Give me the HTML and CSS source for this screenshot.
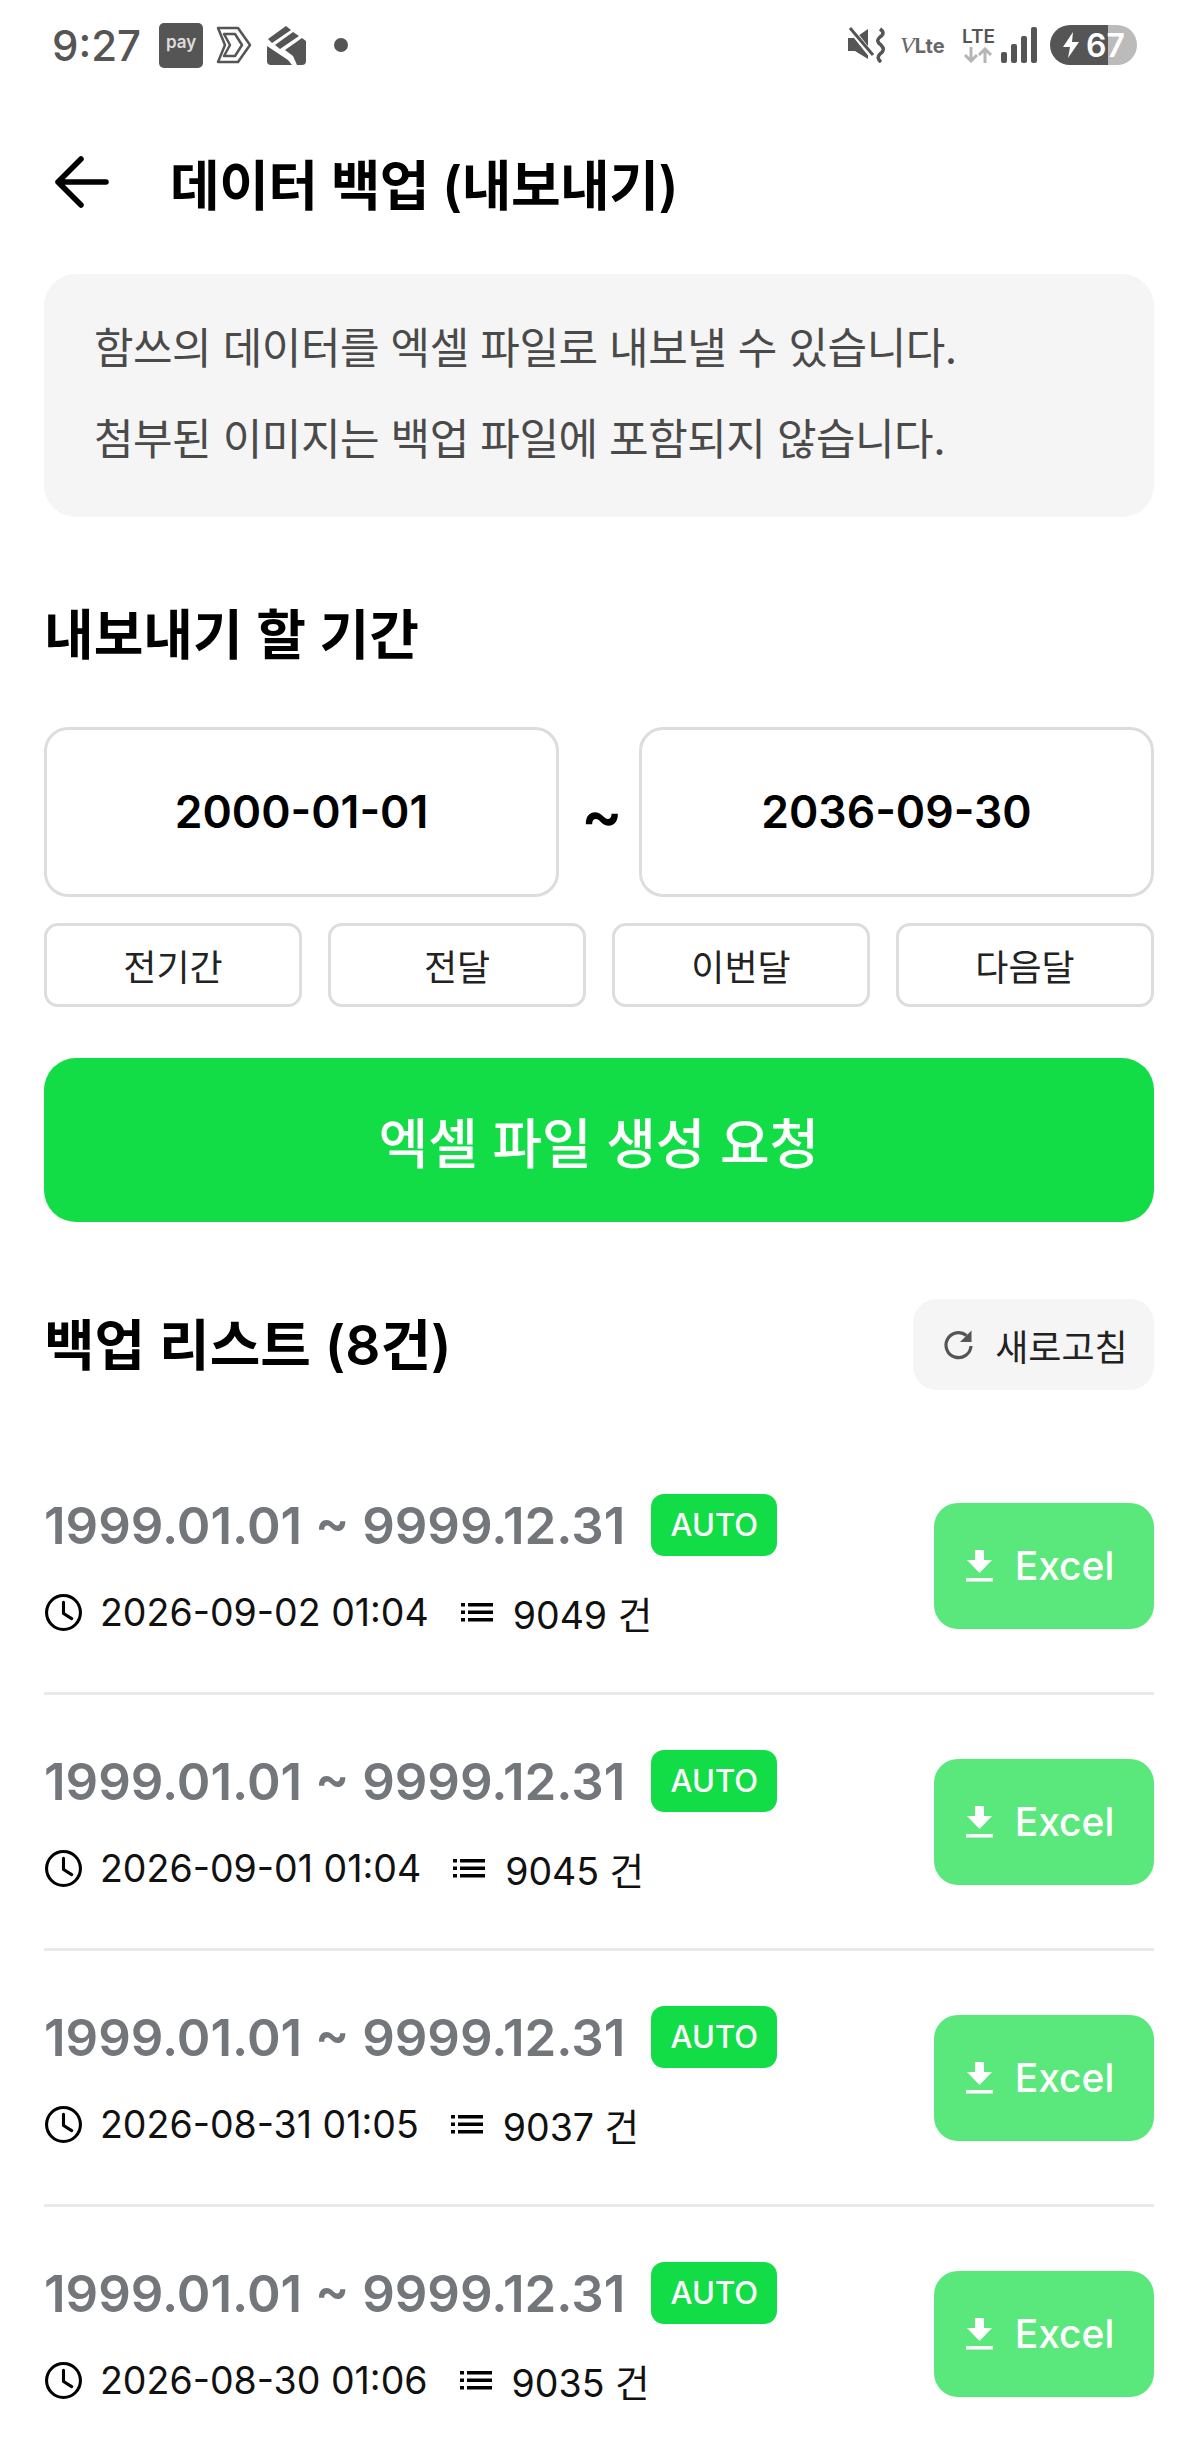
FILE: index.html
```html
<!DOCTYPE html>
<html lang="ko">
<head>
    <meta charset="UTF-8">
    <meta name="viewport" content="width=device-width, initial-scale=1.0">
    <title>데이터 백업 (내보내기)</title>
    <link rel="stylesheet" href="styles.css">
</head>
<body>
    <div class="status-bar">
        <div class="status-left">
            <span class="status-time">9:27</span>
            <span class="pay-icon">pay</span>
            <svg class="notif-icon" width="37" height="38" viewBox="0 0 37 38" fill="none" stroke="#555" stroke-width="2.5" stroke-linejoin="round"><path d="M3 2H23L35 19L23 36H3L10 19Z"/><path d="M9 8H20L27 19L20 30H9L15 19Z"/></svg>
            <svg class="notif-icon" width="41" height="42" viewBox="0 0 41 42" fill="#555"><path d="M1 22L22 36L26 41H5Q1 41 1 37Z"/><path d="M19 26L36 14L40 17V37Q40 41 36 41H31L27 32Z"/><path d="M2 15L20 2L25 6L6 19ZM9 21L27 8L33 12L14 25Z"/></svg>
            <span class="status-dot"></span>
        </div>
        <div class="status-right">
            <svg width="40" height="36" viewBox="0 0 40 36" fill="#555"><path d="M1 11H8L21 2V32L8 24H1Z"/><path d="M2 0L26 30" stroke="#fff" stroke-width="6"/><path d="M3 1L26 28" stroke="#555" stroke-width="3"/><path d="M33 2Q39 6 33 10Q28 14 34 18Q39 23 33 27Q29 31 34 35" fill="none" stroke="#555" stroke-width="3.5"/></svg>
            <span class="volte"><i>V</i><b>Lte</b></span>
            <span class="lte"><span>LTE</span><svg width="30" height="16" viewBox="0 0 30 16" fill="none" stroke="#b5b5b5" stroke-width="3"><path d="M8 0V14M2 8L8 14L14 8M22 16V2M16 8L22 2L28 8"/></svg></span>
            <svg class="signal" width="36" height="38" viewBox="0 0 36 38" fill="#555"><rect x="0" y="26" width="6" height="11" rx="2"/><rect x="10" y="18" width="6" height="19" rx="2"/><rect x="20" y="10" width="6" height="27" rx="2"/><rect x="30" y="1" width="6" height="36" rx="2"/></svg>
            <div class="battery">
                <svg width="18" height="26" viewBox="0 0 18 26" fill="#fff"><path d="M11 0L1 15H8L6 26L17 10H10Z"/></svg>
                <span>67</span>
            </div>
        </div>
    </div>

    <div class="page-header">
        <svg class="back-icon" width="54" height="52" viewBox="0 0 54 52" fill="none" stroke="#000" stroke-width="5.5" stroke-linecap="round" stroke-linejoin="round"><path d="M26 3L3 26L26 49M3 26H51"/></svg>
        <h1>데이터 백업 (내보내기)</h1>
    </div>

    <div class="content">
        <div class="info-box">
            <p>함쓰의 데이터를 엑셀 파일로 내보낼 수 있습니다.</p>
            <p>첨부된 이미지는 백업 파일에 포함되지 않습니다.</p>
        </div>

        <h2 class="period-title">내보내기 할 기간</h2>
        <div class="date-range">
            <div class="date-box">2000-01-01</div>
            <span class="tilde">~</span>
            <div class="date-box">2036-09-30</div>
        </div>
        <div class="quick-btns">
            <button class="quick-btn">전기간</button>
            <button class="quick-btn">전달</button>
            <button class="quick-btn">이번달</button>
            <button class="quick-btn">다음달</button>
        </div>
        <button class="create-btn">엑셀 파일 생성 요청</button>

        <div class="list-header">
            <h2>백업 리스트 (8건)</h2>
            <button class="refresh-btn">
                <svg width="32" height="32" viewBox="0 0 32 32" fill="none" stroke="#555" stroke-width="3.2"><path d="M28 17A12.5 12.5 0 1 1 23.5 6.5"/><path d="M28.5 1.5V13H17Z" fill="#555" stroke="none"/></svg>
                새로고침
            </button>
        </div>

        <div id="backup-list"></div>
    </div>

    <script>
        const backups = [
            ["2026-09-02 01:04", "9049"],
            ["2026-09-01 01:04", "9045"],
            ["2026-08-31 01:05", "9037"],
            ["2026-08-30 01:06", "9035"]
        ];
        document.getElementById("backup-list").innerHTML = backups.map(b => `
            <div class="backup-row">
                <div class="backup-info">
                    <div class="backup-period"><span class="period-text">1999.01.01 ~ 9999.12.31</span><span class="auto-badge">AUTO</span></div>
                    <div class="backup-meta">
                        <svg width="39" height="39" viewBox="0 0 38 38" fill="none" stroke="#000" stroke-width="3"><circle cx="19" cy="19" r="16.5"/><path d="M19 9V20L27 25" stroke-linecap="round" stroke-linejoin="round"/></svg>
                        <span class="meta-date">${b[0]}</span>
                        <svg class="list-icon" width="32" height="24" viewBox="0 0 32 24" fill="#000"><rect x="0" y="3" width="4" height="3.5"/><rect x="7" y="3" width="25" height="3.5"/><rect x="0" y="10.5" width="4" height="3.5"/><rect x="7" y="10.5" width="25" height="3.5"/><rect x="0" y="18" width="4" height="3.5"/><rect x="7" y="18" width="25" height="3.5"/></svg>
                        <span>${b[1]} 건</span>
                    </div>
                </div>
                <button class="excel-btn">
                    <svg width="27" height="32" viewBox="0 0 27 32" fill="#fff"><path d="M9 0H18V10H26L13.5 23L1 10H9Z"/><rect x="0" y="28" width="27" height="3.5"/></svg>
                    Excel
                </button>
            </div>`).join('');
    </script>
</body>
</html>
```
FILE: styles.css
```css
* { box-sizing: border-box; }
html, body { height: 2450px; overflow: hidden; }
body { margin: 0; background: #fff; color: #000; font-family: Inter, "Noto Sans CJK KR", sans-serif; }
button { font-family: inherit; cursor: pointer; }
h1, h2, p { margin: 0; }

.status-bar { height: 92px; padding: 22px 0 0 52px; display: flex; justify-content: space-between; align-items: flex-start; }
.status-left { display: flex; align-items: center; height: 46px; }
.status-time { font-size: 42px; font-weight: 500; color: #555; margin-right: 18px; }
.pay-icon { width: 44px; height: 45px; border-radius: 5px; background: #555; color: #ddd; font-size: 17px; font-weight: 600; text-align: center; line-height: 38px; margin-right: 12px; }
.notif-icon { margin-right: 14px; }
.status-dot { width: 14px; height: 14px; border-radius: 50%; background: #555; margin-left: 13px; }
.status-right { display: flex; align-items: center; gap: 13px; height: 46px; padding-right: 59px; }
.volte { font-size: 16px; color: #666; width: 47px; white-space: nowrap; }
.volte i { font-family: "Liberation Serif", serif; font-size: 24px; }
.volte b { font-size: 20px; }
.lte { display: flex; flex-direction: column; align-items: center; font-size: 19px; font-weight: 600; color: #555; line-height: 20px; margin-left: 2px; }
.signal { margin-left: -7px; }
.battery { width: 87px; height: 40px; border-radius: 20px; display: flex; align-items: center; gap: 6px; padding-left: 12px; background: linear-gradient(90deg, #555 67%, #bbb 67%); color: #fff; font-size: 32px; font-weight: 600; }

.page-header { height: 90px; padding: 0 0 0 55px; display: flex; align-items: center; gap: 61px; margin-top: 45px; }
.page-header h1 { font-size: 54px; font-weight: 600; letter-spacing: -0.5px; }

.content { padding: 0 42px 0 44px; }
.info-box { height: 243px; margin-top: 47px; padding: 48px 50px; border-radius: 32px; background: #f5f5f5; color: #4a4a4a; font-size: 43px; line-height: 52px; letter-spacing: -0.5px; white-space: nowrap; }
.info-box p + p { margin-top: 39px; }

.period-title { font-size: 54px; font-weight: 600; line-height: 64px; margin-top: 87px; }
.date-range { display: flex; align-items: center; gap: 22px; margin-top: 59px; }
.date-box { flex: 1; height: 170px; border: 3px solid #ddd; border-radius: 24px; display: flex; align-items: center; justify-content: center; font-size: 44.5px; font-weight: 600; }
.tilde { width: 36px; text-align: center; font-size: 62px; font-weight: 600; line-height: 70px; padding: 6px 3px 0 0; }
.quick-btns { display: grid; grid-template-columns: repeat(4, 1fr); gap: 26px; margin-top: 26px; }
.quick-btn { height: 84px; border: 3px solid #ddd; border-radius: 14px; background: #fff; color: #222; font-size: 36px; }
.create-btn { display: block; width: 100%; height: 164px; margin-top: 51px; border: none; border-radius: 32px; background: #12dd46; color: #fff; font-size: 54px; font-weight: 500; }

.list-header { display: flex; justify-content: space-between; align-items: center; margin-top: 77px; height: 91px; }
.list-header h2 { font-size: 55px; font-weight: 600; padding-bottom: 8px; }
.refresh-btn { width: 241px; height: 91px; border: none; border-radius: 24px; background: #f5f5f5; color: #222; font-size: 36px; display: flex; align-items: center; justify-content: center; gap: 20px; padding: 0 0 0 4px; }

#backup-list { margin-top: 49px; }
.backup-row { height: 256px; border-bottom: 3px solid #eaeaea; display: flex; align-items: center; justify-content: space-between; }
.backup-row:last-child { border-bottom-color: transparent; }
.backup-period { display: flex; align-items: center; gap: 26px; font-size: 51px; font-weight: 600; color: #73777b; }
.period-text { padding-top: 3px; }
.auto-badge { width: 126px; height: 62px; border-radius: 13px; background: #12dd46; color: #fff; font-size: 31px; font-weight: 500; display: flex; align-items: center; justify-content: center; margin-top: 2px; }
.backup-meta { display: flex; align-items: center; margin-top: 29px; font-size: 37.5px; color: #111; }
.meta-date { margin: 0 32px 0 17px; }
.list-icon { margin-right: 20px; }
.excel-btn { width: 220px; height: 126px; border: none; border-radius: 24px; background: #5ae87d; color: #fff; font-size: 39px; font-weight: 550; display: flex; align-items: center; justify-content: center; gap: 22px; padding: 0 8px 0 0; }
```
